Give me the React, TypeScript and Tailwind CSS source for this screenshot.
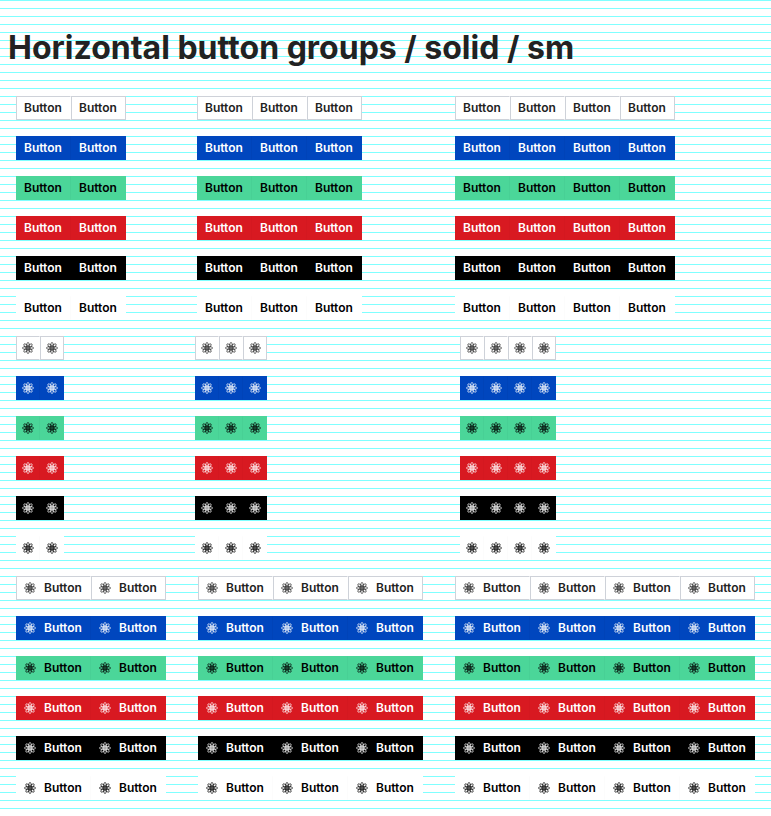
import React from "react";

type Kind = "text" | "icon" | "both";

const variants = [
  { name: "default", button: "border-[#ced2d9] bg-white text-[#222]", divider: "border-r-white" },
  { name: "primary", button: "border-[#0046be] bg-[#0046be] text-white", divider: "border-r-[#0043b8]" },
  { name: "success", button: "border-[#4bd699] bg-[#4bd699] text-black", divider: "border-r-[#48d095]" },
  { name: "danger", button: "border-[#d81921] bg-[#d81921] text-white", divider: "border-r-[#d41820]" },
  { name: "black", button: "border-black bg-black text-white", divider: "border-r-black" },
  { name: "white", button: "border-white bg-white text-black", divider: "border-r-[#fcfcfc]" },
];

const sections: { kind: Kind; columns: string }[] = [
  { kind: "text", columns: "grid-cols-[181fr_258fr_316fr]" },
  { kind: "icon", columns: "grid-cols-[179fr_265fr_311fr]" },
  { kind: "both", columns: "grid-cols-[182fr_257fr_316fr]" },
];

function AtomIcon() {
  return (
    <svg viewBox="0 0 24 24" className="size-3 shrink-0" fill="none" stroke="currentColor" strokeWidth="1.3" aria-hidden="true">
      {[0, 45, 90, 135].map((angle) => (
        <ellipse key={angle} cx="12" cy="12" rx="11.3" ry="3.4" transform={`rotate(${angle} 12 12)`} />
      ))}
      <circle cx="12" cy="12" r="1.8" fill="currentColor" stroke="none" />
    </svg>
  );
}

const sizes = {
  text: "w-[55px] px-[7px]",
  icon: "w-6 px-[5px]",
  both: "w-[75px] px-[7px]",
};

function ButtonGroup({ kind, count, button, divider }: { kind: Kind; count: number; button: string; divider: string }) {
  return (
    <div role="group" className="flex h-6 w-max">
      {Array.from({ length: count }, (_, i) => (
        <button
          key={i}
          type="button"
          aria-label={kind === "icon" ? "Button" : undefined}
          className={`flex items-center gap-2 border text-xs font-semibold ${sizes[kind]} ${button} ${i < count - 1 ? divider : ""}`}
        >
          {kind !== "text" && <AtomIcon />}
          {kind !== "icon" && <span>Button</span>}
        </button>
      ))}
    </div>
  );
}

export default function App() {
  return (
    <main className="bg-[repeating-linear-gradient(to_bottom,#80ffff_0px,#80ffff_1px,transparent_1px,transparent_8px)] px-2 pt-6 pb-2 font-['Inter',sans-serif] text-[#222]">
      <h1 className="mb-4 text-[32px] leading-[48px] font-bold">Horizontal button groups / solid / sm</h1>
      {sections.map(({ kind, columns }) => (
        <section key={kind}>
          {variants.map(({ name, button, divider }) => (
            <div key={name} className={`grid ${columns}`}>
              {[2, 3, 4].map((count) => (
                <div key={count} className="min-w-0 p-2">
                  <ButtonGroup kind={kind} count={count} button={button} divider={divider} />
                </div>
              ))}
            </div>
          ))}
        </section>
      ))}
    </main>
  );
}
